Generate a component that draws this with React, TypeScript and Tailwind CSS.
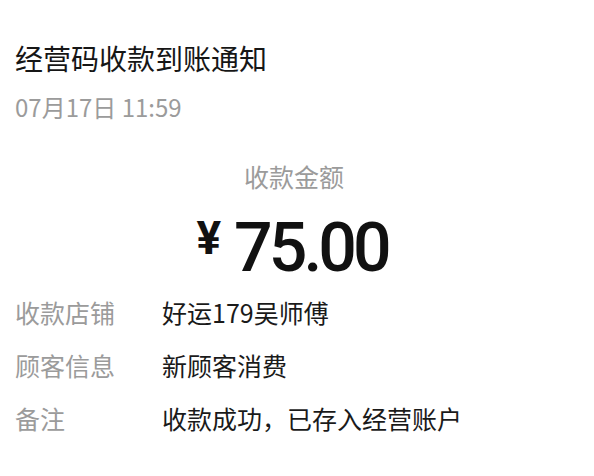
import React from "react";

const cjk = { fontFamily: '"Noto Sans CJK SC", "Noto Sans", sans-serif' };

export default function App() {
  const rows = [
    ["收款店铺", "好运179吴师傅"],
    ["顾客信息", "新顾客消费"],
    ["备注", "收款成功，已存入经营账户"],
  ];
  return (
    <div className="w-[594px] h-[476px] bg-white overflow-hidden" style={cjk}>
      <div className="pt-[38px] px-[15px]">
        <div className="text-[28px] leading-[40px] text-[#161616]">经营码收款到账通知</div>
        <div className="mt-[13px] text-[24px] leading-[32px] text-[#9b9b9b]">07月17日 11:59</div>
        <div className="mt-[37px] text-center text-[25px] leading-[32px] text-[#9b9b9b] pr-[6px]">收款金额</div>
        <div className="mt-[14px] flex justify-center items-start h-[80px] pr-[10px]">
          <span
            className="text-[46px] leading-[46px] font-bold text-[#111] mt-[9px] mr-[13px]"
            style={{ fontFamily: 'Roboto, "Noto Sans", sans-serif' }}
          >
            ¥
          </span>
          <span
            className="text-[68px] leading-[80px] font-medium text-[#111] tracking-[-4px] mt-[2px]"
            style={{ fontFamily: 'Roboto, "Noto Sans", sans-serif' }}
          >
            75.00
          </span>
        </div>
        <div className="flex flex-col">
          {rows.map(([k, v]) => (
            <div key={k} className="flex h-[53px] items-center text-[25px] leading-[53px]">
              <div className="w-[147px] text-[#9b9b9b]">{k}</div>
              <div className="text-[#1a1a1a]">{v}</div>
            </div>
          ))}
        </div>
      </div>
    </div>
  );
}
